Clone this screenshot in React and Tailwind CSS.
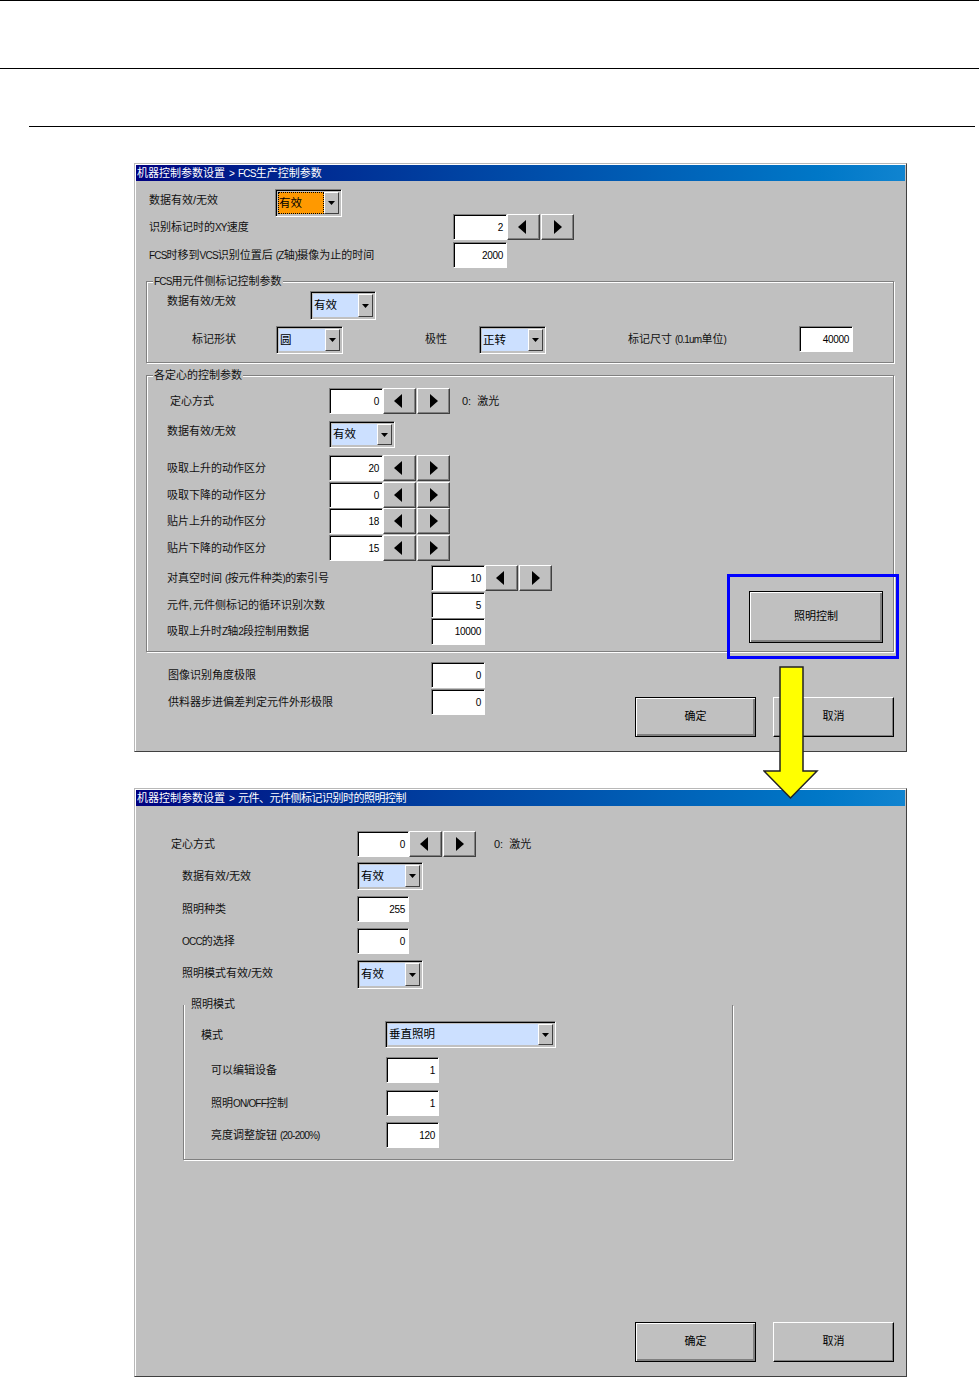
import React from "react";

const font = "font-['Liberation_Sans','Noto_Sans_CJK_SC',sans-serif]";

const Label = ({ className, children }) => (
  <div className={`shrink-0 whitespace-nowrap text-[11px] text-[#111] ${className}`}>{children}</div>
);

// latin runs are half-width in the original bitmap font
const Lat = ({ children }) => <span className="text-[10px] leading-none tracking-[-0.8px]">{children}</span>;

const Input = ({ value, className }) => (
  <div className={`shrink-0 box-border flex items-center justify-end pr-[3px] bg-white text-[10px] tracking-[-0.3px] text-black border border-t-[#808080] border-l-[#808080] border-r-white border-b-white shadow-[inset_1px_1px_0_#000] ${className}`}>
    {value}
  </div>
);

const Combo = ({ value, className, focused }) => (
  <div className={`shrink-0 box-border flex p-[2px] border border-t-[#808080] border-l-[#808080] border-r-white border-b-white shadow-[inset_1px_1px_0_#000,inset_-1px_-1px_0_#c0c0c0] ${className}`}>
    <div className={focused
      ? "flex-1 flex items-center pl-[1px] pt-[1px] text-[11.5px] text-black bg-[#ff9900] outline-1 outline-dotted outline-black -outline-offset-1"
      : "flex-1 flex items-center pl-[1px] pt-[1px] text-[11.5px] text-black bg-[#cce0ff]"}>
      {value}
    </div>
    <div className="w-[15px] box-border flex items-center justify-center bg-[#c0c0c0] border border-t-white border-l-white border-r-[#404040] border-b-[#404040]">
      <svg width="7" height="4" viewBox="0 0 7 4"><polygon points="0,0 7,0 3.5,4" fill="#000" /></svg>
    </div>
  </div>
);

const Arrow = ({ right }) => (
  <div className={right
    ? "shrink-0 box-border w-[33px] h-[26px] mr-[1px] flex items-center justify-center bg-[#c0c0c0] border border-t-white border-l-white border-r-[#404040] border-b-[#404040] shadow-[inset_-1px_-1px_0_#808080]"
    : "shrink-0 box-border w-[33px] h-[26px] mr-[1px] pr-[3px] flex items-center justify-center bg-[#c0c0c0] border border-t-white border-l-white border-r-[#404040] border-b-[#404040] shadow-[inset_-1px_-1px_0_#808080]"}>
    <svg width="8" height="14" viewBox="0 0 8 14">
      <polygon points={right ? "0,0 8,7 0,14" : "8,0 0,7 8,14"} fill="#000" />
    </svg>
  </div>
);

const Spin = () => (
  <>
    <Arrow />
    <Arrow right />
  </>
);

const BigButton = ({ children, primary, className }) => (
  <button className={primary
    ? `shrink-0 box-border flex items-center justify-center pb-[2px] bg-[#c0c0c0] text-[11px] text-black border border-black shadow-[inset_1px_1px_0_#fff,inset_-2px_-2px_0_#808080] ${className}`
    : `shrink-0 box-border flex items-center justify-center pb-[2px] bg-[#c0c0c0] text-[11px] text-black border border-t-white border-l-white border-r-black border-b-black shadow-[inset_-1px_-1px_0_#808080] ${className}`}>
    {children}
  </button>
);

const Legend = ({ children }) => (
  <div className="absolute -top-[8px] left-[6px] px-[1px] h-[15px] bg-[#c0c0c0] text-[11px] leading-[15px] text-[#111] whitespace-nowrap">{children}</div>
);

const Dialog = ({ title, children }) => (
  <div className="box-border ml-[134px] w-[773px] h-[589px] p-[1px] flex flex-col bg-[#c0c0c0] border border-t-[#b8b8b8] border-l-[#b8b8b8] border-r-[#404040] border-b-[#404040] shadow-[inset_1px_1px_0_#fff]">
    <div className="h-[16px] shrink-0 pl-[1px] flex items-center text-[11px] text-white whitespace-nowrap bg-gradient-to-r from-[#000080] to-[#1084d0]">
      <div>{title}</div>
    </div>
    <div className="flex-1 flex flex-col">{children}</div>
  </div>
);

const OkCancel = ({ className }) => (
  <div className={`flex gap-[17px] ${className}`}>
    <BigButton primary className="w-[121px] h-[40px]">确定</BigButton>
    <BigButton className="w-[121px] h-[40px]">取消</BigButton>
  </div>
);

const ParamDialog = () => (
  <Dialog title={<>机器控制参数设置<Lat><span className="mx-[4px]">&gt;</span>FCS</Lat>生产控制参数</>}>
    <div className="flex ml-[13px] mt-[8px]">
      <Label className="w-[126px] leading-[22px]">数据有效/无效</Label>
      <Combo value="有效" focused className="w-[67px] h-[28px]" />
    </div>
    <div className="flex ml-[13px] -mt-[3px]">
      <Label className="w-[304px] h-[26px] leading-[26px]">识别标记时的<Lat>XY</Lat>速度</Label>
      <Input value="2" className="w-[54px] h-[26px]" />
      <Spin />
    </div>
    <div className="flex ml-[13px] mt-[2px]">
      <Label className="w-[304px] h-[26px] leading-[26px]"><Lat>FCS</Lat>时移到<Lat>VCS</Lat>识别位置后 <Lat>(Z</Lat>轴<Lat>)</Lat>摄像为止的时间</Label>
      <Input value="2000" className="w-[54px] h-[26px]" />
    </div>

    <div className="relative box-border ml-[10px] mt-[13px] w-[748px] h-[82px] border border-[#808080] shadow-[1px_1px_0_#fff,inset_1px_1px_0_#fff]">
      <Legend><Lat>FCS</Lat>用元件侧标记控制参数</Legend>
      <div className="flex ml-[20px] mt-[9px]">
        <Label className="w-[143px] leading-[20px]">数据有效/无效</Label>
        <Combo value="有效" className="w-[66px] h-[29px]" />
      </div>
      <div className="flex ml-[45px] mt-[6px]">
        <Label className="w-[84px] leading-[26px]">标记形状</Label>
        <Combo value="圆" className="w-[67px] h-[28px]" />
        <Label className="ml-[82px] w-[54px] leading-[26px]">极性</Label>
        <Combo value="正转" className="w-[67px] h-[28px]" />
        <Label className="ml-[82px] w-[171px] h-[26px] leading-[26px]">标记尺寸 <Lat>(0.1um</Lat>单位<Lat>)</Lat></Label>
        <Input value="40000" className="w-[54px] h-[26px]" />
      </div>
    </div>

    <div className="relative box-border ml-[10px] mt-[12px] w-[748px] h-[277px] border border-[#808080] shadow-[1px_1px_0_#fff,inset_1px_1px_0_#fff]">
      <Legend>各定心的控制参数</Legend>
      <div className="flex ml-[23px] mt-[12px]">
        <Label className="w-[159px] leading-[26px]">定心方式</Label>
        <Input value="0" className="w-[54px] h-[26px]" />
        <Spin />
        <Label className="ml-[11px] leading-[26px]">0:&nbsp; 激光</Label>
      </div>
      <div className="flex ml-[20px] mt-[7px]">
        <Label className="w-[162px] leading-[20px]">数据有效/无效</Label>
        <Combo value="有效" className="w-[66px] h-[27px]" />
      </div>
      <div className="flex ml-[20px] mt-[7px]">
        <Label className="w-[162px] leading-[26px]">吸取上升的动作区分</Label>
        <Input value="20" className="w-[54px] h-[26px]" />
        <Spin />
      </div>
      <div className="flex ml-[20px] mt-[1px]">
        <Label className="w-[162px] leading-[26px]">吸取下降的动作区分</Label>
        <Input value="0" className="w-[54px] h-[26px]" />
        <Spin />
      </div>
      <div className="flex ml-[20px]">
        <Label className="w-[162px] leading-[26px]">贴片上升的动作区分</Label>
        <Input value="18" className="w-[54px] h-[26px]" />
        <Spin />
      </div>
      <div className="flex ml-[20px] mt-[1px]">
        <Label className="w-[162px] leading-[26px]">贴片下降的动作区分</Label>
        <Input value="15" className="w-[54px] h-[26px]" />
        <Spin />
      </div>
      <div className="flex mt-[4px]">
        <div className="w-[405px] pl-[20px] shrink-0">
          <div className="flex">
            <Label className="w-[264px] h-[26px] leading-[26px]">对真空时间 <Lat>(</Lat>按元件种类<Lat>)</Lat>的索引号</Label>
            <Input value="10" className="w-[54px] h-[26px]" />
            <Spin />
          </div>
          <div className="flex mt-[1px]">
            <Label className="w-[264px] h-[26px] leading-[26px]">元件<Lat>, </Lat>元件侧标记的循环识别次数</Label>
            <Input value="5" className="w-[54px] h-[26px]" />
          </div>
          <div className="flex">
            <Label className="w-[264px] h-[26px] leading-[26px]">吸取上升时<Lat>Z</Lat>轴<Lat>2</Lat>段控制用数据</Label>
            <Input value="10000" className="w-[54px] h-[27px]" />
          </div>
        </div>
        <BigButton primary className="ml-[197px] mt-[26px] w-[134px] h-[52px]">照明控制</BigButton>
      </div>
    </div>

    <div className="flex mt-[10px]">
      <div className="w-[499px] shrink-0 pl-[32px]">
        <div className="flex">
          <Label className="w-[263px] leading-[26px]">图像识别角度极限</Label>
          <Input value="0" className="w-[54px] h-[26px]" />
        </div>
        <div className="flex mt-[1px]">
          <Label className="w-[263px] leading-[26px]">供料器步进偏差判定元件外形极限</Label>
          <Input value="0" className="w-[54px] h-[26px]" />
        </div>
      </div>
      <OkCancel className="mt-[35px]" />
    </div>
  </Dialog>
);

const LightDialog = () => (
  <Dialog title={<>机器控制参数设置<Lat><span className="mx-[4px]">&gt;</span></Lat><span className="tracking-[-0.5px]">元件、元件侧标记识别时的照明控制</span></>}>
    <div className="flex ml-[35px] mt-[25px]">
      <Label className="w-[186px] leading-[26px]">定心方式</Label>
      <Input value="0" className="w-[52px] h-[26px]" />
      <Spin />
      <Label className="ml-[17px] leading-[26px]">0:&nbsp; 激光</Label>
    </div>
    <div className="flex ml-[46px] mt-[5px]">
      <Label className="w-[175px] leading-[28px]">数据有效/无效</Label>
      <Combo value="有效" className="w-[66px] h-[28px]" />
    </div>
    <div className="flex ml-[46px] mt-[6px]">
      <Label className="w-[175px] leading-[26px]">照明种类</Label>
      <Input value="255" className="w-[52px] h-[26px]" />
    </div>
    <div className="flex ml-[46px] mt-[6px]">
      <Label className="w-[175px] h-[26px] leading-[26px]"><Lat>OCC</Lat>的选择</Label>
      <Input value="0" className="w-[52px] h-[26px]" />
    </div>
    <div className="flex ml-[46px] mt-[6px]">
      <Label className="w-[175px] leading-[26px]">照明模式有效/无效</Label>
      <Combo value="有效" className="w-[66px] h-[29px]" />
    </div>

    <div className="relative box-border ml-[47px] mt-[16px] w-[550px] h-[155px] border border-t-0 border-[#808080] shadow-[1px_1px_0_#fff,inset_1px_0_0_#fff]">
      <Legend>照明模式</Legend>
      <div className="flex ml-[17px] mt-[16px]">
        <Label className="w-[184px] leading-[28px]">模式</Label>
        <Combo value="垂直照明" className="w-[171px] h-[27px]" />
      </div>
      <div className="flex ml-[27px] mt-[8px]">
        <Label className="w-[175px] leading-[26px]">可以编辑设备</Label>
        <Input value="1" className="w-[53px] h-[26px]" />
      </div>
      <div className="flex ml-[27px] mt-[7px]">
        <Label className="w-[175px] h-[26px] leading-[26px]">照明<Lat>ON/OFF</Lat>控制</Label>
        <Input value="1" className="w-[53px] h-[26px]" />
      </div>
      <div className="flex ml-[27px] mt-[6px]">
        <Label className="w-[175px] h-[26px] leading-[26px]">亮度调整旋钮 <Lat>(20-200%)</Lat></Label>
        <Input value="120" className="w-[53px] h-[26px]" />
      </div>
    </div>

    <OkCancel className="mt-auto mb-[13px] ml-[499px]" />
  </Dialog>
);

export default function App() {
  return (
    <div className={`relative w-[979px] h-[1377px] overflow-hidden bg-white ${font}`}>
      <div className="h-px bg-black" />
      <div className="h-px bg-black mt-[67px]" />
      <div className="h-px bg-black mt-[57px] ml-[29px] mr-[4px]" />
      <div className="mt-[36px]">
        <ParamDialog />
      </div>
      <div className="mt-[36px]">
        <LightDialog />
      </div>

      {/* callout drawn over the screenshots */}
      <div className="absolute left-[727px] top-[574px] w-[172px] h-[85px] box-border border-[3px] border-[#0000ff]" />
      <svg className="absolute left-[763px] top-[666px]" width="56" height="134" viewBox="0 0 56 134">
        <polygon points="17,1 40,1 40,105 54,105 27.5,132 1,105 17,105" fill="#ffff00" stroke="#222" strokeWidth="1.5" />
      </svg>
    </div>
  );
}
